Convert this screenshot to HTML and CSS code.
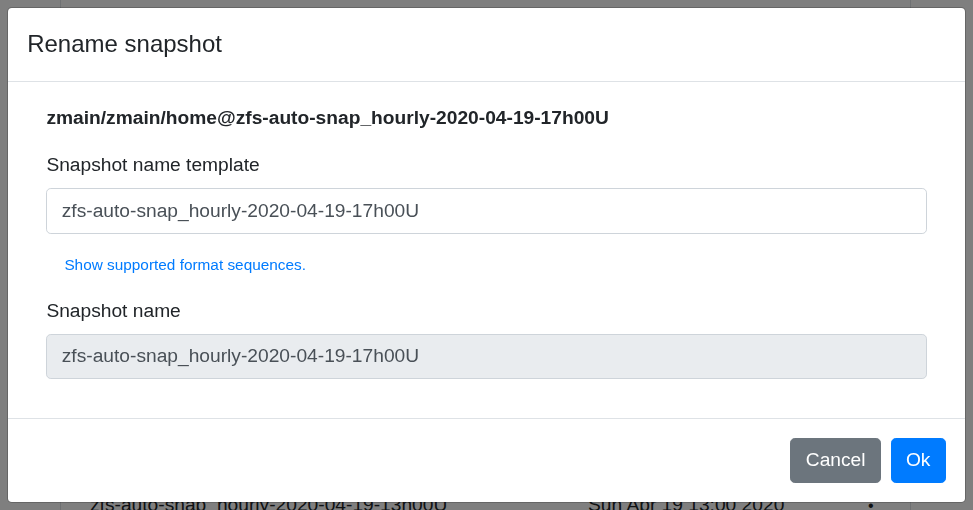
FILE: index.html
```html
<!DOCTYPE html>
<html lang="en">
<head>
<meta charset="utf-8">
<title>Rename snapshot</title>
<link rel="stylesheet" href="styles.css">
</head>
<body>
<div class="page">
  <div class="row">
    <span class="cell-name">zfs-auto-snap_hourly-2020-04-19-13h00U</span>
    <span class="cell-date">Sun Apr 19 13:00 2020</span>
    <span class="cell-dot">•</span>
  </div>
</div>
<div class="backdrop"></div>
<div class="modal">
  <div class="modal-header">
    <h5 class="modal-title">Rename snapshot</h5>
  </div>
  <div class="modal-body">
    <div class="inner">
      <div class="path">zmain/zmain/home@zfs-auto-snap_hourly-2020-04-19-17h00U</div>
      <div class="group">
        <label class="label">Snapshot name template</label>
        <input class="control" type="text" value="zfs-auto-snap_hourly-2020-04-19-17h00U">
        <div class="hint"><a class="hint-link" href="#">Show supported format sequences.</a></div>
      </div>
      <div class="group last">
        <label class="label">Snapshot name</label>
        <input class="control disabled" type="text" value="zfs-auto-snap_hourly-2020-04-19-17h00U" disabled>
      </div>
    </div>
  </div>
  <div class="modal-footer">
    <button class="btn btn-secondary">Cancel</button>
    <button class="btn btn-primary">Ok</button>
  </div>
</div>
</body>
</html>
```

FILE: styles.css
```css
html, body {
  margin: 0;
  padding: 0;
  height: 100%;
  overflow: hidden;
  background: #fff;
  font-family: "Liberation Sans", Arial, sans-serif;
  font-size: 19.2px;
  line-height: 1.5;
  color: #212529;
}

.page {
  margin: 0 62px 0 60px;
  height: 510px;
  border-left: 1px solid #dee2e6;
  border-right: 1px solid #dee2e6;
  box-sizing: border-box;
  padding-top: 491px;
}

.row {
  display: flex;
  align-items: baseline;
  white-space: nowrap;
}

.cell-name {
  margin-left: 29px;
  width: 498px;
}

.cell-date {
  width: 280px;
}

.cell-dot {
  font-size: 16px;
}

.backdrop {
  position: fixed;
  inset: 0;
  background: rgba(0, 0, 0, 0.5);
}

.modal {
  position: fixed;
  left: 7px;
  top: 7px;
  width: 959px;
  box-sizing: border-box;
  background: #fff;
  background-clip: padding-box;
  border: 1px solid rgba(0, 0, 0, 0.2);
  border-radius: 4.8px;
  display: flex;
  flex-direction: column;
}

.modal-header {
  padding: 17.6px 19.2px 19.6px;
  border-bottom: 1px solid #dee2e6;
}

.modal-title {
  margin: 0;
  font-size: 24px;
  font-weight: 500;
  line-height: 1.5;
}

.modal-body {
  padding: 22px 19.2px 19.2px;
}

.inner {
  padding: 0 19.2px;
}

.path {
  font-weight: bold;
  margin-bottom: 18.2px;
}

.group {
  margin-bottom: 19.2px;
}

.group.last {
  margin-bottom: 19.2px;
}

.label {
  display: block;
  margin-bottom: 8px;
}

.control {
  display: block;
  width: 100%;
  box-sizing: border-box;
  height: 45.6px;
  padding: 7.2px 14.4px;
  font-family: inherit;
  font-size: 19.2px;
  line-height: 1.5;
  color: #495057;
  background: #fff;
  border: 1px solid #ced4da;
  border-radius: 4.8px;
  margin: 0;
}

.control.disabled {
  background: #e9ecef;
  opacity: 1;
  -webkit-text-fill-color: #495057;
}

.hint {
  margin: 19.9px 0 0 18px;
  padding-bottom: 1.2px;
  font-size: 15.36px;
  line-height: 23px;
}

.hint-link {
  color: #007bff;
  text-decoration: none;
}

.modal-footer {
  display: flex;
  justify-content: flex-end;
  align-items: center;
  padding: 14.4px;
  border-top: 1px solid #dee2e6;
}

.btn {
  margin: 4.8px;
  font-family: inherit;
  font-size: 19.2px;
  line-height: 1.5;
  padding: 7.2px 14.4px;
  border: 1px solid transparent;
  border-radius: 4.8px;
  color: #fff;
}

.btn-secondary {
  background: #6c757d;
  border-color: #6c757d;
}

.btn-primary {
  background: #007bff;
  border-color: #007bff;
}
```
